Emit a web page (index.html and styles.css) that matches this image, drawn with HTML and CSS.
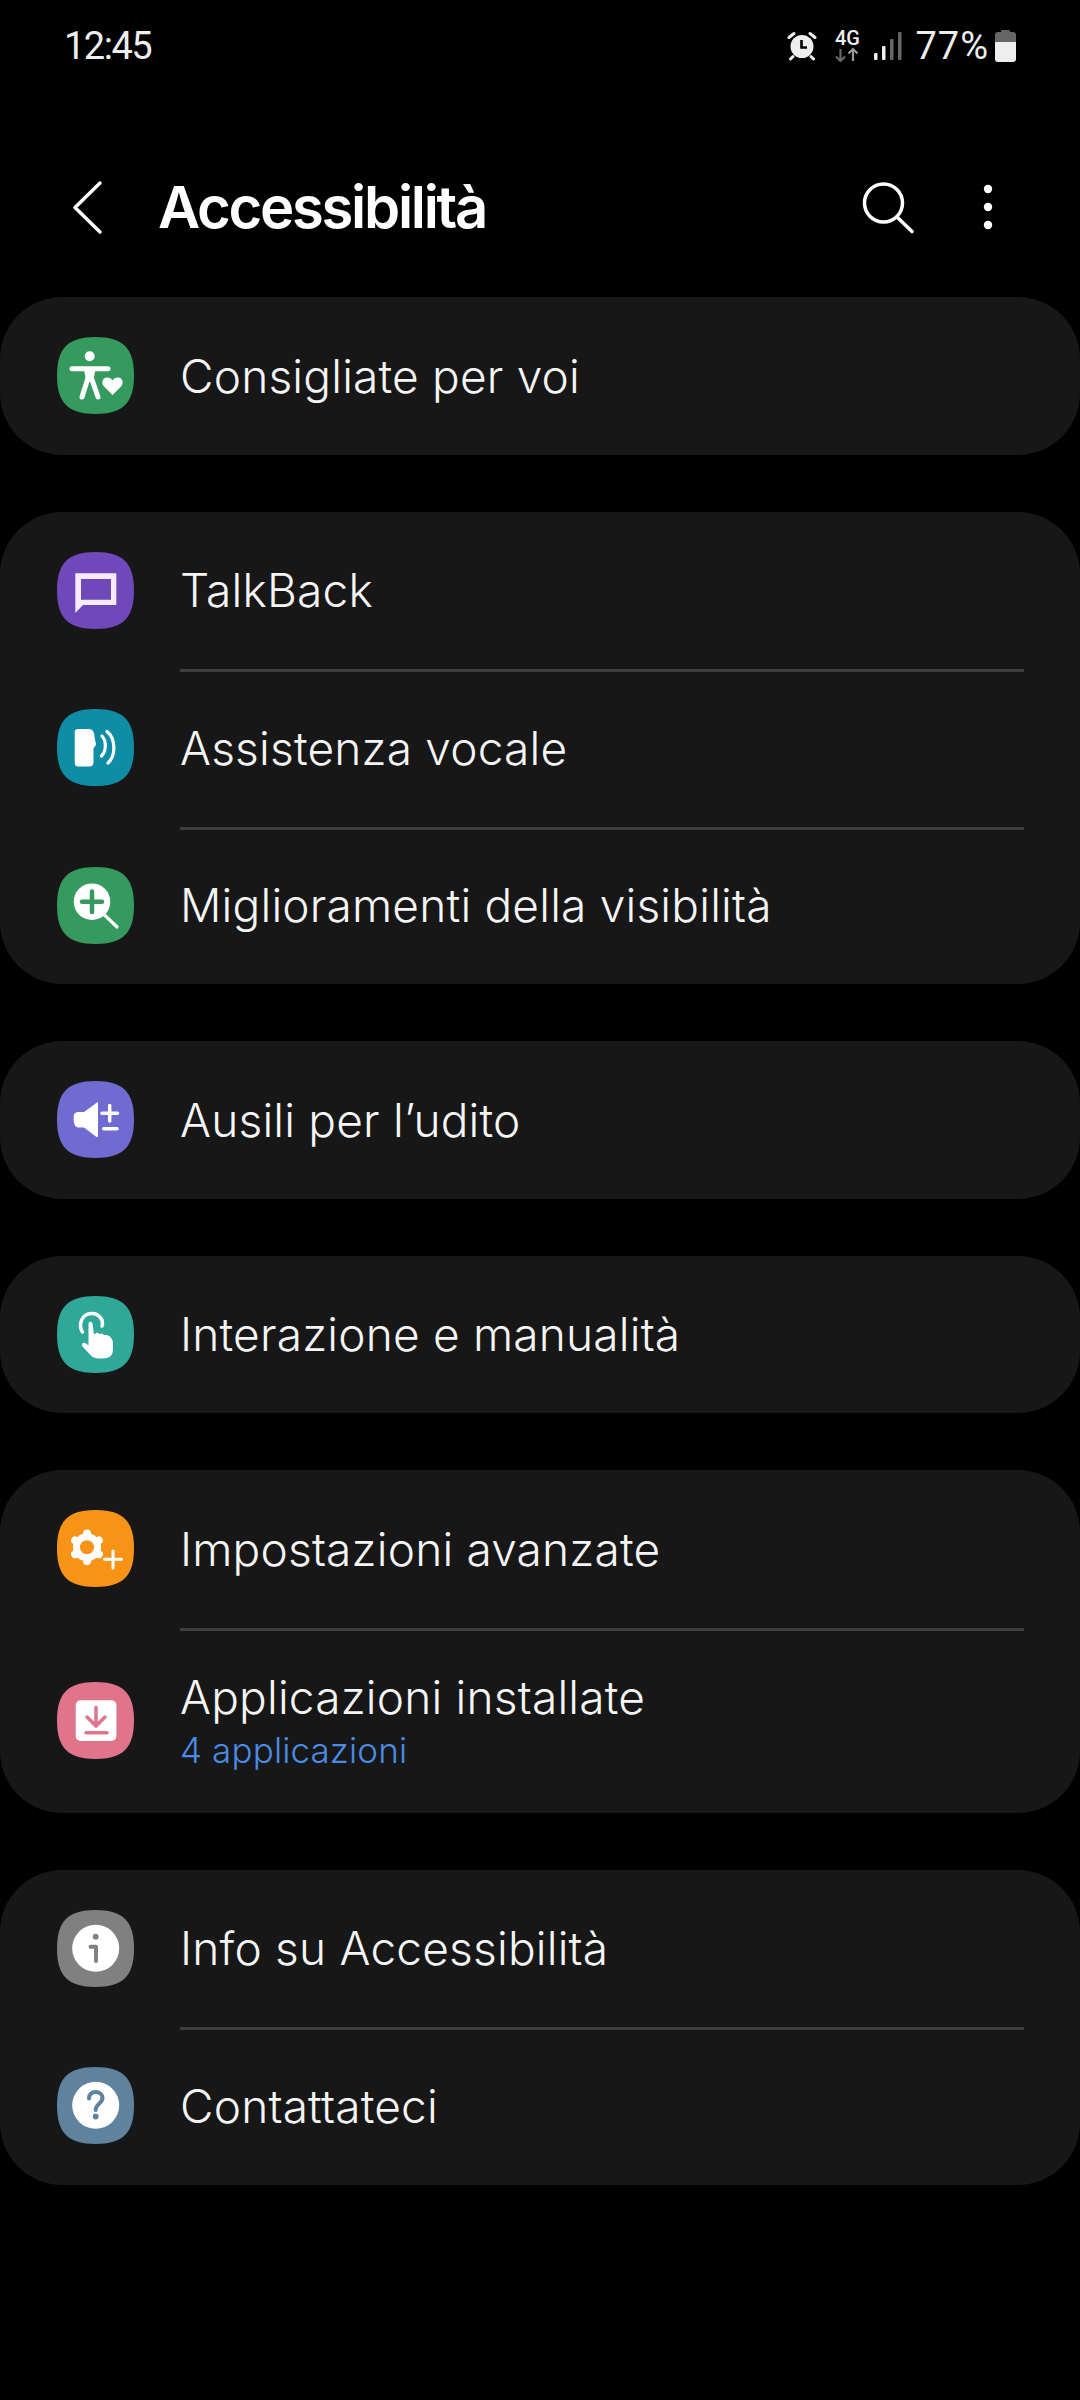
FILE: index.html
```html
<!DOCTYPE html>
<html lang="it">

<head>
    <meta charset="UTF-8">
    <meta name="viewport" content="width=device-width, initial-scale=1.0">
    <title>Accessibilità</title>

    <link rel="stylesheet" href="styles.css">
</head>

<body>
    <div class="statusbar">
        <span class="clock">12:45</span>
        <div class="status-right">
            <svg class="st-alarm" viewBox="0 0 30 30">
                <circle cx="15" cy="15.5" r="11.5" fill="#eee" />
                <path d="M2 6.500 7 2.500M28 6.500 23 2.500M6 25.500 3.500 28M24 25.500 26.500 28" stroke="#eee" stroke-width="3" stroke-linecap="round" />
                <path d="M14.500 9V16.500H20" fill="none" stroke="#000" stroke-width="2.600" />
            </svg>
            <div class="st-net">
                <span class="st-4g">4G</span>
                <svg class="st-arrows" viewBox="0 0 26 15">
                    <path d="M6.500 2V14M2 9.500 6.500 14 11 9.500" fill="none" stroke="#666" stroke-width="2.200" />
                    <path d="M19 14V2M14.500 6.500 19 2 23.500 6.500" fill="none" stroke="#999" stroke-width="2.200" />
                </svg>
            </div>
            <svg class="st-signal" viewBox="0 0 28 30">
                <rect x="0" y="22" width="3.500" height="7" rx="1" fill="#eee" />
                <rect x="8" y="15" width="3.500" height="14" rx="1" fill="#eee" />
                <rect x="16" y="8" width="3.500" height="21" rx="1" fill="#666" />
                <rect x="24" y="1" width="3.500" height="28" rx="1" fill="#666" />
            </svg>
            <span class="battery-text">77%</span>
            <svg class="st-battery" viewBox="0 0 21 32">
                <path d="M7 0H14Q15 0 15 2H18Q21 2 21 5V12H0V5Q0 2 3 2H6Q6 0 7 0Z" fill="#666" />
                <path d="M0 12H21V29Q21 32 18 32H3Q0 32 0 29Z" fill="#eee" />
            </svg>
        </div>
    </div>

    <div class="topbar">
        <svg class="ic-back" viewBox="0 0 36 60">
            <path d="M30 6 5 30.500 30 55" fill="none" stroke="#fff" stroke-width="3.500" stroke-linecap="round" stroke-linejoin="round" />
        </svg>
        <h1 class="title">Accessibilità</h1>
        <svg class="ic-search" viewBox="0 0 56 56">
            <circle cx="24.500" cy="24" r="19" fill="none" stroke="#fff" stroke-width="3.500" />
            <path d="M38 38 53 52.500" stroke="#fff" stroke-width="3.500" stroke-linecap="round" />
        </svg>
        <svg class="ic-more" viewBox="0 0 10 46">
            <circle cx="5" cy="5" r="4.200" fill="#fff" />
            <circle cx="5" cy="23" r="4.200" fill="#fff" />
            <circle cx="5" cy="41" r="4.200" fill="#fff" />
        </svg>
    </div>

    <div class="lista">
        <div class="card">
            <div class="row">
                <svg class="icon" viewBox="0 0 77 77">
                    <path class="sq" fill="#359a5e" d="M38.500 0C66 0 77 11 77 38.500 77 66 66 77 38.500 77 11 77 0 66 0 38.500 0 11 11 0 38.500 0Z" />
                    <circle cx="32.700" cy="19.300" r="5" fill="#fff" />
                    <path d="M15 31.700H51M32.700 32V42M31 41 25 60M34.500 41 41 60" fill="none" stroke="#fff" stroke-width="5" stroke-linecap="round" />
                    <path d="M32.700 31 27 33 29.500 45H36L38.500 33Z" fill="#fff" />
                    <path d="M55.500 58 47 49.500C43.500 45.500 46 40.500 50 40.500 52.500 40.500 54.500 41.500 55.500 43.500 56.500 41.500 58.500 40.500 61 40.500 65 40.500 67.500 45.500 64 49.500Z" fill="#fff" />
                </svg>
                <span class="label">Consigliate per voi</span>
            </div>
        </div>

        <div class="card">
            <div class="row">
                <svg class="icon" viewBox="0 0 77 77">
                    <path fill="#6f48b9" d="M38.500 0C66 0 77 11 77 38.500 77 66 66 77 38.500 77 11 77 0 66 0 38.500 0 11 11 0 38.500 0Z" />
                    <path fill="#f6eafb" fill-rule="evenodd" d="M18.300 21.300H59.300V53H26L18.300 61ZM24 27V47.700H54V27Z" />
                </svg>
                <span class="label">TalkBack</span>
            </div>
            <div class="divider"></div>
            <div class="row">
                <svg class="icon" viewBox="0 0 77 77">
                    <path fill="#0f8da5" d="M38.500 0C66 0 77 11 77 38.500 77 66 66 77 38.500 77 11 77 0 66 0 38.500 0 11 11 0 38.500 0Z" />
                    <path fill="#fff" d="M21 20H32C36 20 37.500 24 37.500 28L39 35C39 37 37 38 36.500 39.500V53C36.500 56 35 57.500 32 57.500H21C19 57.500 17.700 56 17.700 54V23C17.700 21 19 20 21 20Z" />
                    <path d="M45 27C49.500 32 49.500 42 44.500 47M50 22.500C59 30 59 47 51 54" fill="none" stroke="#fff" stroke-width="3.200" stroke-linecap="round" />
                </svg>
                <span class="label">Assistenza vocale</span>
            </div>
            <div class="divider"></div>
            <div class="row">
                <svg class="icon" viewBox="0 0 77 77">
                    <path fill="#359a5e" d="M38.500 0C66 0 77 11 77 38.500 77 66 66 77 38.500 77 11 77 0 66 0 38.500 0 11 11 0 38.500 0Z" />
                    <circle cx="35" cy="34.700" r="18.300" fill="#fff" />
                    <path d="M35 24.500V45M25 34.700H45" stroke="#359a5e" stroke-width="4.500" stroke-linecap="round" />
                    <path d="M47.500 48 60 60" stroke="#fff" stroke-width="3.200" stroke-linecap="round" />
                </svg>
                <span class="label">Miglioramenti della visibilità</span>
            </div>
        </div>

        <div class="card">
            <div class="row">
                <svg class="icon" viewBox="0 0 77 77">
                    <path fill="#6f6bd0" d="M38.500 0C66 0 77 11 77 38.500 77 66 66 77 38.500 77 11 77 0 66 0 38.500 0 11 11 0 38.500 0Z" />
                    <path fill="#fff" d="M40 21.500C40.800 21 41 21.700 41 22.500V55C41 56.300 40 56.500 39.200 55.700L27 46.500H22C19 46.500 16.700 44 16.700 39V36C16.700 32 19 31 22 31H27Z" />
                    <path d="M52.700 24.500V40M45 32.300H60.500M46.700 47.700H60" stroke="#fff" stroke-width="3.500" stroke-linecap="round" />
                </svg>
                <span class="label">Ausili per l’udito</span>
            </div>
        </div>

        <div class="card">
            <div class="row">
                <svg class="icon" viewBox="0 0 77 77">
                    <path fill="#2fa89a" d="M38.500 0C66 0 77 11 77 38.500 77 66 66 77 38.500 77 11 77 0 66 0 38.500 0 11 11 0 38.500 0Z" />
                    <path d="M25.500 36C21 29 24.500 18 34 17.500 42 17 47 24 45 30" fill="none" stroke="#fff" stroke-width="3.500" stroke-linecap="round" />
                    <path fill="#fff" d="M31.500 27.500C31.500 25 35 25 35.500 27.500L37 38.500 40 36.500 43 38 45 37.500 47 39 50 39C53 40 56 43 56 47V53C56 59 53 62.500 46 62.500H41C37 62.500 34 60 32 57.500L25.500 50.500C24 48 26 45.500 29 47.500L31.500 49.500Z" />
                </svg>
                <span class="label">Interazione e manualità</span>
            </div>
        </div>

        <div class="card">
            <div class="row">
                <svg class="icon" viewBox="0 0 77 77">
                    <path fill="#f79317" d="M38.500 0C66 0 77 11 77 38.500 77 66 66 77 38.500 77 11 77 0 66 0 38.500 0 11 11 0 38.500 0Z" />
                    <circle cx="30" cy="37.300" r="14" fill="#fff" />
                    <path d="M30 23.500V51M18.100 30.400 41.900 44.200M18.100 44.200 41.900 30.400" stroke="#fff" stroke-width="8" stroke-linecap="round" />
                    <circle cx="30" cy="37.300" r="7" fill="#f79317" />
                    <path d="M56 41V58M47.500 49.300H64.500" stroke="#fff" stroke-width="3" stroke-linecap="round" />
                </svg>
                <span class="label">Impostazioni avanzate</span>
            </div>
            <div class="divider"></div>
            <div class="row row-tall">
                <svg class="icon" viewBox="0 0 77 77">
                    <path fill="#e0748a" d="M38.500 0C66 0 77 11 77 38.500 77 66 66 77 38.500 77 11 77 0 66 0 38.500 0 11 11 0 38.500 0Z" />
                    <rect x="18.700" y="18.300" width="40.700" height="40.700" rx="5" fill="#fff" />
                    <path d="M39 25.500V44M30 35 39 44 48 35" fill="none" stroke="#e0748a" stroke-width="3.500" stroke-linecap="round" stroke-linejoin="round" />
                    <path d="M29 50.700H50" stroke="#e0748a" stroke-width="3.500" stroke-linecap="round" />
                </svg>
                <div class="text-wrap">
                    <span class="label">Applicazioni installate</span>
                    <span class="sublabel">4 applicazioni</span>
                </div>
            </div>
        </div>

        <div class="card">
            <div class="row">
                <svg class="icon" viewBox="0 0 77 77">
                    <path fill="#808080" d="M38.500 0C66 0 77 11 77 38.500 77 66 66 77 38.500 77 11 77 0 66 0 38.500 0 11 11 0 38.500 0Z" />
                    <circle cx="38.700" cy="38.300" r="23.500" fill="#fff" />
                    <circle cx="38.700" cy="26.700" r="2.900" fill="#808080" />
                    <path d="M33.500 36.700H39V51" fill="none" stroke="#808080" stroke-width="4" stroke-linecap="round" stroke-linejoin="round" />
                </svg>
                <span class="label">Info su Accessibilità</span>
            </div>
            <div class="divider"></div>
            <div class="row">
                <svg class="icon" viewBox="0 0 77 77">
                    <path fill="#5f829e" d="M38.500 0C66 0 77 11 77 38.500 77 66 66 77 38.500 77 11 77 0 66 0 38.500 0 11 11 0 38.500 0Z" />
                    <circle cx="38.700" cy="38.300" r="23.500" fill="#fff" />
                    <path d="M32 31.500C32 27 35 25 38.700 25 42.500 25 45.500 27.500 45.500 31 45.500 36.500 38.700 36.500 38.700 43" fill="none" stroke="#5f829e" stroke-width="4" stroke-linecap="round" />
                    <circle cx="38.700" cy="49.500" r="2.900" fill="#5f829e" />
                </svg>
                <span class="label">Contattateci</span>
            </div>
        </div>
    </div>
</body>

</html>
```

FILE: styles.css
```css
body {
    margin: 0;
    width: 1080px;
    min-height: 2400px;
    background-color: #000;
    color: #fff;
    font-family: "Inter", "Roboto", sans-serif;
}

/* status bar */
.statusbar {
    height: 92px;
    padding: 0 64px;
    display: flex;
    justify-content: space-between;
    align-items: center;
    color: #eee;
}
.clock { font-family: "Roboto", sans-serif; font-size: 38px; letter-spacing: -1.500px; }
.status-right { display: flex; align-items: center; }
.st-alarm { width: 30px; height: 30px; margin-right: 17px; }
.st-net { width: 26px; height: 32px; margin-right: 14px; display: flex; flex-direction: column; align-items: center; }
.st-4g { font-family: "Roboto", sans-serif; font-size: 20px; line-height: 17px; font-weight: 500; color: #eee; }
.st-arrows { width: 26px; height: 15px; }
.st-signal { width: 28px; height: 30px; margin-right: 13px; }
.battery-text { font-family: "Roboto", sans-serif; font-size: 38px; letter-spacing: 1px; margin-right: 6px; }
.st-battery { width: 21px; height: 32px; }

/* top bar */
.topbar {
    height: 205px;
    box-sizing: border-box;
    display: flex;
    align-items: center;
    padding-top: 24px;
    padding-left: 70px;
    padding-right: 87px;
}
.ic-back { width: 36px; height: 60px; margin-right: 52px; }
.title {
    flex: 1;
    margin: 0;
    font-size: 58px;
    font-weight: 600;
    letter-spacing: -2.300px;
}
.ic-search { width: 56px; height: 56px; margin-right: 68px; }
.ic-more { width: 10px; height: 46px; }

/* cards */
.lista { display: flex; flex-direction: column; gap: 57px; }
.card { background-color: #171717; border-radius: 62px; }
.row {
    height: 157.500px;
    padding-left: 57px;
    display: flex;
    align-items: center;
    gap: 46px;
}
.row-tall { height: 185px; }
.icon { width: 77px; height: 77px; flex-shrink: 0; }
.label { font-size: 46px; font-weight: 350; color: #f5f5f5; letter-spacing: 0.200px; }
.sublabel { font-size: 35px; font-weight: 350; color: #4a8ce6; letter-spacing: 0.130px; }
.text-wrap { display: flex; flex-direction: column; gap: 4px; }
.divider { height: 3px; margin: 0 56px -3px 180px; background-color: #3e3e3e; position: relative; }
```
